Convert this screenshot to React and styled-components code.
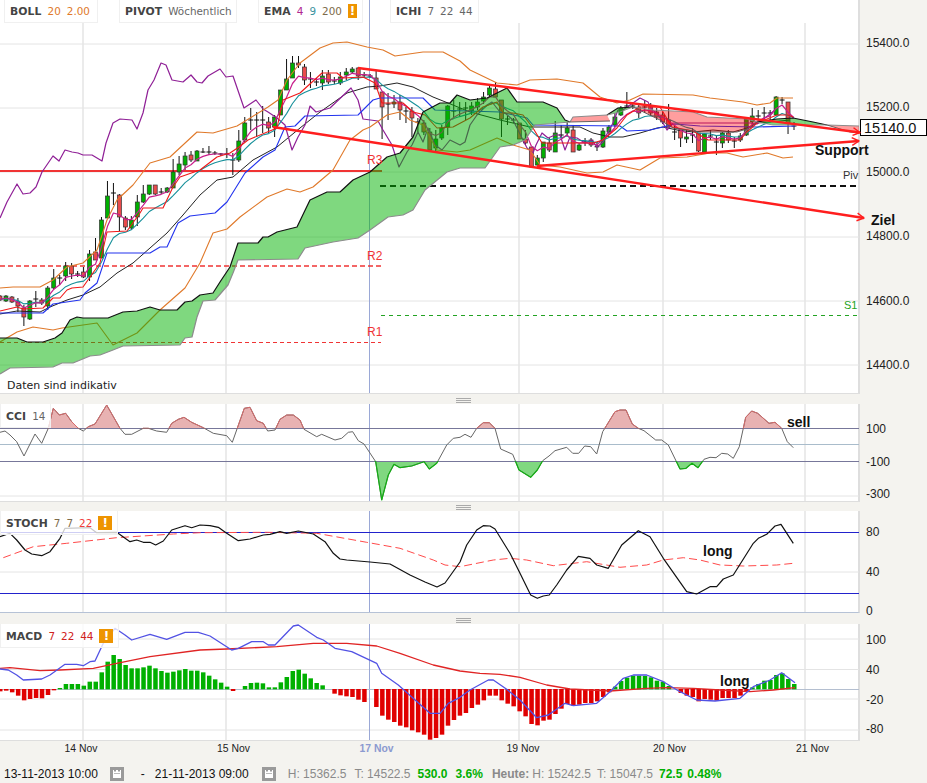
import React from 'react';
import styled, { createGlobalStyle } from 'styled-components';

const GlobalStyle = createGlobalStyle`
    html, body {
        margin: 0;
        padding: 0;
        background: #f4f3ef;
    }
`

const colors = {
    grid: '#e4e4e4',
    marker: '#9aa8d6',
    panel: '#f4f3ef',
    border: '#dedede',
    trend: '#ff1e1e',
    pivot: '#f03434',
    green: '#00b000',
    candleRed: '#e94b4b',
    orange: '#e0792a',
    text: '#222',
    muted: '#8a8a8a'
}

// traced from the 3x crops: offset + point / 3
const trace = (ox, oy, line) => line.trim().split(/\s+/).map(p => {
    const [x, y] = p.split(',').map(Number)
    return `${(ox + x / 3).toFixed(1)},${(oy + y / 3).toFixed(1)}`
}).join(' ')

const reversed = line => line.trim().split(/\s+/).reverse().join(' ')
const STEP = 5.97

// hi, lo, top, bottom, kind (g up, r down, d doji with top only)
const candles = [
    [295,301,296,300,'r'],[295,302,296,301,'g'],[296,303,297,302,'r'],[298,312,302,306,'r'],[305,326,308,317,'r'],
    [300,320,301,319,'g'],[291,307,299,299,'d'],[298,305,300,303,'r'],[286,310,288,306,'g'],[269,290,278,288,'g'],
    [275,285,278,278,'d'],[262,281,266,276,'g'],[263,279,266,274,'r'],[271,277,274,274,'d'],[267,278,272,277,'r'],
    [250,281,254,277,'g'],[238,260,252,260,'r'],[217,258,220,258,'g'],[181,218,196,218,'g'],[183,205,193,193,'d'],
    [194,231,195,217,'r'],[216,230,218,227,'r'],[216,230,220,228,'g'],[195,226,202,217,'g'],[185,203,194,202,'g'],
    [185,195,185,194,'g'],[185,195,185,194,'r'],[188,194,192,192,'d'],[187,193,188,192,'g'],[159,188,172,188,'g'],
    [156,175,164,172,'g'],[152,170,156,165,'g'],[151,162,155,160,'r'],[150,161,151,161,'g'],[148,153,152,152,'d'],
    [146,155,152,152,'d'],[151,155,153,153,'d'],[153,156,154,154,'d'],[148,158,154,154,'d'],[153,175,160,160,'d'],
    [130,162,141,160,'g'],[117,142,123,140,'g'],[108,130,120,120,'d'],[112,137,120,120,'d'],[106,133,120,120,'d'],
    [117,133,122,128,'r'],[115,137,117,127,'g'],[90,115,90,115,'g'],[59,90,79,90,'g'],[56,78,63,78,'g'],
    [56,68,63,65,'r'],[64,85,67,80,'r'],[72,88,79,79,'d'],[78,86,82,82,'d'],[70,90,76,83,'g'],
    [70,84,74,82,'r'],[77,84,81,81,'d'],[72,85,77,83,'g'],[68,80,72,75,'g'],[67,74,69,72,'g'],
    [67,80,68,76,'r'],[72,78,75,75,'d'],[74,78,76,76,'d'],[71,89,78,89,'r'],[92,139,92,107,'r'],
    [93,120,104,104,'d'],[95,108,102,104,'g'],[95,120,102,110,'r'],[107,123,111,111,'d'],[107,137,111,118,'r'],
    [118,132,122,122,'d'],[120,135,123,132,'r'],[128,150,132,150,'r'],[130,152,139,148,'g'],[125,140,128,138,'g'],
    [105,135,106,127,'g'],[100,118,111,111,'d'],[102,117,109,109,'d'],[102,120,108,108,'d'],[102,115,106,111,'g'],
    [98,110,102,107,'g'],[92,104,97,101,'g'],[86,96,88,95,'g'],[82,97,89,97,'r'],[100,137,100,119,'r'],
    [116,125,119,119,'d'],[118,123,120,120,'d'],[123,139,123,139,'r'],[130,145,139,143,'r'],[147,167,147,167,'r'],
    [155,167,158,165,'g'],[142,162,142,158,'g'],[138,152,143,150,'r'],[121,152,133,152,'g'],[125,138,135,135,'d'],
    [122,135,128,133,'g'],[125,152,130,152,'r'],[143,151,145,150,'g'],[138,146,142,142,'d'],[138,147,140,145,'r'],
    [142,151,146,147,'r'],[128,148,131,147,'g'],[125,135,127,132,'g'],[113,127,117,125,'g'],[106,116,108,115,'g'],
    [92,107,106,106,'d'],[102,109,106,106,'d'],[103,118,107,113,'r'],[100,113,107,107,'d'],[103,116,106,113,'r'],
    [108,120,112,117,'r'],[112,124,115,122,'r'],[104,127,120,127,'r'],[125,140,132,132,'d'],[130,147,130,138,'r'],
    [130,143,137,139,'g'],[128,143,135,135,'d'],[133,152,133,151,'r'],[134,152,134,152,'g'],[130,140,136,136,'d'],
    [135,155,142,142,'d'],[132,148,133,143,'g'],[130,143,133,140,'r'],[137,148,141,141,'d'],[133,142,136,140,'g'],
    [118,136,119,135,'g'],[108,127,116,122,'g'],[110,122,116,116,'d'],[107,119,113,113,'d'],[110,121,113,113,'d'],
    [96,115,97,115,'g'],[97,104,100,100,'d'],[102,134,102,123,'r'],[122,130,126,126,'d']
]

const ema = k => {
    let value = 299
    return candles.map((c, i) => {
        const close = c[4] === 'g' ? c[2] : c[3]
        value = value + (close - value) * k
        return `${(i * STEP).toFixed(1)},${value.toFixed(1)}`
    }).join(' ')
}

const lines = {
    lagging: `0,218 7,202 17,184 23,194 30,193 36,187 42,172 53,156 59,161 65,150 72,152 78,153 83,155 92,155 102,161 106,143 113,123 120,119 132,120 137,129 143,113 148,90 154,80 161,63 166,65 172,80 183,82 191,75 197,82 202,83 208,76 220,69 226,77 233,76 244,108 256,100 263,109 268,112 277,118 285,125 292,150 298,137 305,125 310,106 316,112 330,108 351,88 358,100 363,119 378,121 383,130 392,145 399,167 407,152 412,145 418,132 423,142 428,128 435,145 442,150 450,140 460,145 465,142 470,125 477,115 487,105 492,102 500,112 505,113 513,120 518,130 523,140 527,148 533,153 536,145 542,133 548,138 555,135 560,135 565,150 570,137 577,138 585,143 592,140 597,147 603,142 608,132 613,123 618,110 623,110 633,103 640,98 648,102 652,110 657,113 663,123 667,130 673,123 750,123 757,124 765,118 775,110`,
    slow: `0,314 17,311 40,312 50,307 67,300 83,295 100,287 117,273 133,263 150,248 167,233 183,215 200,195 217,180 233,177 253,160 277,147 300,128 320,112 347,93 367,87 380,86 397,83 413,87 433,97 448,103 470,112 500,120 530,127 550,127 580,127 593,133 610,137 623,137 640,133 657,128 663,127 677,130 693,132 713,130 733,132 747,128 757,123 770,122 790,120`,
    base: `0,313 43,313 53,304 80,300 85,293 97,283 107,253 150,253 160,247 167,247 178,223 190,216 215,213 227,202 245,173 263,157 275,150 285,127 295,126 305,116 358,115 373,100 380,98 423,98 435,110 500,112 527,118 533,125 620,126 627,131 650,130 663,127 675,124 700,126 757,127 795,126`,
    conversion: `0,311 17,307 23,309 43,308 53,298 60,298 67,290 72,288 83,287 100,263 107,232 127,231 140,213 143,208 163,208 173,187 180,177 200,170 217,157 230,153 239,147 248,140 277,128 283,100 300,93 322,73 337,73 343,78 363,77 375,83 382,103 403,103 413,112 425,115 437,128 453,127 470,118 483,107 497,102 503,113 513,113 523,115 533,128 542,143 593,143 603,140 617,128 627,115 640,107 660,107 672,127 693,131 708,140 740,140 747,132 757,123 777,115 788,115 793,117`,
    upper: `0,288 13,287 40,287 53,280 67,267 83,263 97,250 107,220 117,200 133,185 150,163 170,157 197,132 213,133 237,126 268,107 278,100 287,80 300,63 320,48 333,43 347,42 367,47 383,50 395,56 423,52 443,52 460,61 470,70 497,83 517,85 530,80 557,79 583,83 600,97 617,103 630,100 643,94 693,95 710,98 743,102 757,105 770,103 777,98 793,98`,
    lower: `0,342 17,332 33,327 53,330 62,328 97,323 113,345 137,333 160,310 185,288 200,263 213,233 227,229 240,217 267,197 287,189 300,192 313,187 333,170 350,140 363,130 370,127 387,115 400,112 410,120 423,125 437,150 457,152 470,150 497,138 513,145 530,150 540,165 560,167 587,173 603,172 617,165 640,170 660,158 687,157 710,153 727,153 743,157 767,153 783,158 793,157`
}

const cloud = {
    greenTop: `0,338 17,338 27,342 43,342 55,338 62,333 70,320 77,317 83,318 108,318 123,312 137,311 150,307 160,310 177,310 185,302 192,301 200,295 213,293 220,282 230,267 238,243 258,243 263,237 268,237 277,232 297,227 310,200 327,192 340,192 353,180 370,172 387,157 400,153 413,137 423,112 440,103 450,103 457,95 470,100 487,98 507,88 517,102 543,102 557,108 565,120 570,122`,
    greenBottom: `0,374 10,368 53,367 62,363 73,363 90,356 100,355 113,350 123,346 180,345 185,338 192,337 197,317 203,301 215,300 228,285 233,273 238,260 298,259 305,248 333,242 358,238 370,230 388,217 403,215 413,210 425,190 447,172 460,168 485,168 500,147 513,145 525,140 535,125 570,122`,
    bands: [
        { top: '570,122 573,117 607,115', bottom: '570,122 610,121', fill: 'pink' },
        { top: '607,115 618,108 633,107', bottom: '607,115 620,112 633,107', fill: 'green' },
        { top: '633,107 653,110 693,112 707,117 747,119 757,122', bottom: '633,107 660,120 673,128 700,132 737,132 750,128 757,122', fill: 'pink' },
        { top: '757,122 777,119 793,118 813,122 827,125', bottom: '757,122 773,125 827,125', fill: 'green' },
        { top: '827,125 859,126', bottom: '827,125 837,128 850,132 859,133', fill: 'pink' }
    ]
}

const cci = `${trace(0, 380, `0,157 15,153 30,165 50,185 72,228 105,162 125,190 145,145 160,85 178,105 197,100 215,125 235,145 250,153 265,140 285,132 320,75 360,145 375,163 395,163 430,145 445,145 470,153 500,157 515,130 535,118 552,112 575,127 610,143 640,160 680,167 697,187 733,85 750,82 770,122 790,130 803,153 825,150 840,118 860,105 880,105 900,120 912,148 950,170 965,163 1005,180 1025,175 1045,157 1058,155 1075,182 1092,192 1127,245 1145,360 1165,285 1182,253 1200,263 1235,258 1272,245 1288,267 1310,250 1340,195 1360,175`)} ${trace(460, 395, `0,127 15,118 33,127 50,100 70,83 88,83 105,100 122,162 158,178 177,225 212,247 232,225 248,197 267,183 285,167 320,157 338,175 356,175 374,153 392,155 410,177 428,110 465,50 480,45 498,45 517,87 535,100 552,107 587,135 605,135 625,150 660,222 678,220 696,205 714,218 732,193 750,187 768,188 785,175 803,177 820,190 838,155 857,67 875,48 893,55 927,85 945,82 965,100 982,140 1000,158`)}`

const stochFast = `${trace(0, 380, `0,470 30,460 50,480 75,510 95,522 125,527 150,515 180,475 195,445 270,443 290,458 350,457 390,485 410,480 430,487 450,487 467,495 490,483 515,450 555,437 575,443 600,435 630,437 655,442 680,460 715,482 750,477 790,465 810,463 840,455 860,460 895,453 940,462 975,485 1000,520 1020,537 1040,540`)} 370,562 390,564 410,575 425,582 437,587 445,583 460,562 ${trace(460, 395, `20,450 50,405 70,392 90,393 105,402 150,475 180,535 212,600 232,610 250,603 268,600 290,570 320,525 355,484 390,490 410,510 445,520 485,450 535,407 570,425 610,490 680,590 710,597 750,575 770,575 790,552 820,540 880,445 895,430 920,418 945,393 963,388 1000,445`)}`

const stochSlow = `${trace(0, 380, `10,533 100,500 200,490 350,473 520,462 600,458 800,457 950,460 1100,487 1200,505 1300,540`)} 445,565 ${trace(460, 395, `0,515 100,495 150,490 200,495 280,512 380,500 480,517 560,510 610,495 670,488 720,495 780,510 850,513 950,510 1000,505`)}`

const macdFast = `${trace(0, 610, `0,177 25,180 50,195 70,210 125,207 150,195 195,163 230,163 250,167 270,155 285,153 310,100 345,55 375,75 395,90 450,73 500,88 555,67 595,67 630,78 695,120 715,115 755,95 790,95 805,105 825,105 880,48 895,45 950,82 970,90 1005,115 1055,125 1130,160 1145,190 1195,225 1290,310 1320,310 1345,280 1380,262`)} ${trace(460, 610, `30,240 85,210 100,210 140,238 180,270 230,323 265,315 315,280 340,287 410,280 450,245 490,205 520,195 560,195 610,215 660,245 710,270 765,273 840,265 880,230 930,210 965,188 1005,218`)}`

const macdSlow = `${trace(0, 610, `0,175 30,173 120,182 180,180 280,175 350,160 450,140 600,120 680,117 830,110 940,100 1040,100 1130,108 1200,130 1300,165 1380,183`)} ${trace(460, 610, `60,190 120,193 180,202 260,225 330,237 450,243 560,235 620,233 700,235 780,240 870,245 940,240 1005,233`)}`

// ends of the histogram bars in 3x crop pixels, zero line at 238
const macdBars = [245,243,248,258,272,268,265,266,256,242,234,222,222,222,227,215,215,187,155,135,147,165,175,175,172,167,175,183,188,185,181,177,182,182,187,197,208,218,230,244,238,228,219,218,220,232,232,217,201,183,179,191,205,219,226,238,252,257,260,262,270,277,238,292,318,330,337,348,353,362,368,375,390,385,375,348,331,318,310,295,285,272,258,258,272,282,290,305,320,343,347,333,330,313,297,283,288,285,280,280,275,262,248,230,213,203,197,197,198,202,212,215,228,238,250,258,262,275,268,270,273,265,265,265,258,245,232,222,212,210,195,190,207,222]

const verticals = [83, 226, 519, 663, 805]

const Page = styled.div`
    width: 927px;
    height: 783px;
    overflow: hidden;
    background: ${colors.panel};
    display: flex;
    flex-direction: column;
    font-family: "Liberation Sans", Arial, sans-serif;
`

const Panel = styled.div`
    display: flex;
    height: ${({ $h }) => $h}px;
    flex: none;
`

const Plot = styled.div`
    position: relative;
    z-index: 2;
    width: 860px;
    height: 100%;
    box-sizing: border-box;
    background: #fff;
    border-right: 2px solid ${colors.border};
    border-bottom: 1px solid ${({ $edge }) => $edge || colors.border};
    flex: none;
`

const Chart = styled.svg`
    display: block;
    overflow: visible;
`

const Axis = styled.div`
    position: relative;
    flex: 1;
    display: grid;
    grid-auto-rows: ${({ $step }) => $step}px;
    align-content: start;
    padding: ${({ $top }) => $top}px 0 0 6px;
    font-size: 12px;
    color: ${colors.text};
`

const AxisValue = styled.div`
    line-height: 14px;
`

const PriceTag = styled.div`
    position: absolute;
    left: 0;
    top: 119px;
    width: 67px;
    height: 17px;
    box-sizing: border-box;
    border: 1px solid #000;
    background: #fff;
    font-size: 14.5px;
    line-height: 16px;
    padding-left: 3px;
    color: #111;
`

const Separator = styled.div`
    height: ${({ $h }) => $h}px;
    flex: none;
    display: flex;
    justify-content: center;
    align-items: flex-end;
    box-sizing: border-box;
    padding-bottom: 1px;
`

const Handle = styled.div`
    width: 15px;
    height: 5px;
    border-top: 1px solid #aaa;
    border-bottom: 1px solid #aaa;
    background: linear-gradient(#aaa, #aaa) center / 100% 1px no-repeat;
    box-sizing: border-box;
`

const LegendBar = styled.div`
    position: absolute;
    left: 4px;
    top: 0;
    display: flex;
    gap: 21px;
`

const Legend = styled.div`
    display: flex;
    align-items: center;
    gap: 6px;
    width: ${({ $w }) => ($w ? `${$w}px` : 'auto')};
    margin-left: ${({ $ml }) => $ml || 0}px;
    height: 23px;
    padding: 0 5px;
    box-sizing: border-box;
    background: rgba(255, 255, 255, 0.78);
    border: 1px solid #f0f0f0;
    border-top: none;
    font-family: "DejaVu Sans", Verdana, sans-serif;
    font-size: 10.4px;
    color: #555;
    white-space: nowrap;
`

const Overlay = styled(Legend)`
    position: absolute;
    left: 0;
    top: 0;
    height: 24px;
    padding-top: 1px;
`

const LegendName = styled.span`
    font-weight: bold;
    color: #444;
    font-size: 10.8px;
    letter-spacing: 0.1px;
`

const LegendValue = styled.span`
    color: ${({ $color }) => $color || '#666'};
`

const Warn = styled.span`
    display: inline-flex;
    align-items: center;
    justify-content: center;
    width: 14px;
    height: 14px;
    background: #ee9400;
    color: #fff;
    font-family: "DejaVu Sans", sans-serif;
    font-size: 12px;
    font-weight: bold;
`

const Ticks = styled.div`
    display: flex;
    height: 23px;
    flex: none;
    padding-top: 1px;
    box-sizing: border-box;
    font-size: 10.4px;
    line-height: 14px;
`

const Tick = styled.div`
    width: ${({ $w }) => $w}px;
    flex: none;
    text-align: center;
    color: ${({ $color }) => $color || colors.text};
    font-weight: ${({ $color }) => ($color ? 'bold' : 'normal')};
`

const Footer = styled.div`
    display: flex;
    align-items: center;
    height: 19px;
    flex: none;
    padding-left: 4px;
    font-size: 12px;
    white-space: nowrap;
    color: ${colors.muted};
`

const DateText = styled.span`
    color: #111;
    margin-left: ${({ $ml }) => $ml || 0}px;
`

const Stat = styled.span`
    margin-left: ${({ $ml }) => $ml}px;
    font-weight: ${({ $bold }) => ($bold ? 'bold' : 'normal')};
    color: ${({ $color }) => $color || colors.muted};
`

const Calendar = styled.svg`
    margin-left: ${({ $ml }) => $ml}px;
    flex: none;
`

const ChartLabel = styled.text`
    font-family: ${({ $font }) => $font || '"Liberation Sans", Arial, sans-serif'};
    font-size: ${({ $size }) => $size || 12}px;
    font-weight: ${({ $bold }) => ($bold ? 'bold' : 'normal')};
    fill: ${({ $color }) => $color || '#111'};
`

const Trace = styled.polyline`
    fill: none;
    stroke: ${({ $color }) => $color};
    stroke-width: ${({ $w }) => $w || 1}px;
    stroke-linejoin: round;
    stroke-dasharray: ${({ $dash }) => $dash || 'none'};
`

const Rule = styled.line`
    stroke: ${({ $color }) => $color || colors.grid};
    stroke-width: ${({ $w }) => $w || 1}px;
    stroke-dasharray: ${({ $dash }) => $dash || 'none'};
`

const GridRules = ({ y1, y2, rows = [] }) => (
    <>
        {rows.map(y => <Rule key={y} x1="0" x2="859" y1={y} y2={y} />)}
        {verticals.map(x => <Rule key={x} x1={x} x2={x} y1={y1} y2={y2} $w="1.5" />)}
        <Rule x1="369.5" x2="369.5" y1={y1} y2={y2} $color={colors.marker} />
    </>
)

const Candles = () => candles.map((c, i) => {
    const [hi, lo, top, bottom, kind] = c
    const x = i * STEP
    return (
        <g key={i}>
            <Rule x1={x} x2={x} y1={hi} y2={lo} $color="#111" />
            {kind === 'd'
                ? <Rule x1={x - 2.5} x2={x + 2.5} y1={top} y2={top} $color="#111" />
                : <rect
                    x={x - 2}
                    y={top}
                    width="4"
                    height={bottom - top}
                    fill={kind === 'g' ? colors.green : colors.candleRed}
                    stroke="#333"
                    strokeWidth="0.7"
                />}
        </g>
    )
})

const Arrow = ({ x1, y1, x2, y2 }) => {
    const a = Math.atan2(y2 - y1, x2 - x1)
    const head = d => `${x2 - 8 * Math.cos(a + d)},${y2 - 8 * Math.sin(a + d)}`
    return (
        <>
            <Rule x1={x1} y1={y1} x2={x2} y2={y2} $color={colors.trend} $w="2.4" />
            <Trace points={`${head(0.5)} ${x2},${y2} ${head(-0.5)}`} $color={colors.trend} $w="1.4" />
        </>
    )
}

const MainChart = () => (
    <Chart width="858" height="393" viewBox="0 0 858 393">
        <GridRules y1="23" y2="393" rows={[44, 108, 172, 237, 301, 365]} />
        <Rule x1="369.5" x2="369.5" y1="0" y2="23" $color={colors.marker} />

        <Rule x1="0" x2="382" y1="171" y2="171" $color={colors.pivot} $w="2.2" />
        <Rule x1="0" x2="381" y1="266" y2="266" $color={colors.pivot} $w="1.6" $dash="5 3" />
        <Rule x1="0" x2="381" y1="342.5" y2="342.5" $color={colors.pivot} $dash="4 3" />
        <Rule x1="380" x2="859" y1="186" y2="186" $color="#111" $w="2" $dash="6 4" />
        <Rule x1="381" x2="859" y1="315.5" y2="315.5" $color="#23a323" $dash="4 4" />

        <Candles />
        <Trace points={lines.slow} $color="#222" />
        <Trace points={lines.lagging} $color="#8f1f96" $w="1.2" />
        <Trace points={lines.upper} $color={colors.orange} $w="1.1" />
        <Trace points={lines.lower} $color={colors.orange} $w="1.1" />
        <Trace points={lines.base} $color="#2233ee" $w="1.1" />
        <Trace points={ema(0.2)} $color="#17909a" $w="1.1" />
        <Trace points={ema(0.4)} $color="#c81e8c" $w="1.2" />
        <Trace points={lines.conversion} $color="#f01818" $w="1.1" />

        <polygon points={`${cloud.greenTop} ${reversed(cloud.greenBottom)}`} fill="rgba(0, 178, 0, 0.5)" />
        <Trace points={cloud.greenTop} $color="#111" $w="1.2" />
        <Trace points={cloud.greenBottom} $color="#8c8c8c" $w="1.2" />
        {cloud.bands.map(band => (
            <g key={band.top}>
                <polygon
                    points={`${band.top} ${reversed(band.bottom)}`}
                    fill={band.fill === 'pink' ? 'rgba(255, 0, 0, 0.38)' : 'rgba(0, 178, 0, 0.5)'}
                />
                <Trace points={band.top} $color={band.fill === 'pink' ? '#8c8c8c' : '#111'} $w="1.1" />
                <Trace points={band.bottom} $color={band.fill === 'pink' ? '#555' : '#8c8c8c'} $w="0.9" />
            </g>
        ))}

        <ChartLabel x="367" y="164" $color={colors.pivot}>R3</ChartLabel>
        <ChartLabel x="367" y="260" $color={colors.pivot}>R2</ChartLabel>
        <ChartLabel x="367" y="336" $color={colors.pivot}>R1</ChartLabel>
        <ChartLabel x="843" y="179" $size="11" $color="#333">Piv</ChartLabel>
        <ChartLabel x="844" y="309" $size="11" $color="#23a323">S1</ChartLabel>
        <ChartLabel x="7" y="389" $size="11" $color="#222" $font='"DejaVu Sans", sans-serif'>Daten sind indikativ</ChartLabel>

        <Arrow x1="358" y1="68" x2="860" y2="132.5" />
        <Arrow x1="273" y1="127" x2="864" y2="218" />
        <Arrow x1="537" y1="166" x2="859" y2="141" />

        <ChartLabel x="815" y="155" $size="14" $bold>Support</ChartLabel>
        <ChartLabel x="871" y="225" $size="14" $bold>Ziel</ChartLabel>
    </Chart>
)

const CciChart = () => (
    <Chart width="858" height="97" viewBox="0 404 858 97">
        <defs>
            <clipPath id="cci-top"><rect x="0" y="404" width="859" height="24.5" /></clipPath>
            <clipPath id="cci-bottom"><rect x="0" y="461" width="859" height="41" /></clipPath>
        </defs>
        <GridRules y1="404" y2="501" rows={[496]} />
        <Rule x1="0" x2="859" y1="444.5" y2="444.5" $color="#a9bccb" />
        <polygon points={`0,428.5 ${cci} 794,428.5`} fill="#e8b2b2" clipPath="url(#cci-top)" />
        <polygon points={`0,461 ${cci} 794,461`} fill="#80d880" clipPath="url(#cci-bottom)" />
        <Rule x1="0" x2="859" y1="428.5" y2="428.5" $color="#77779a" />
        <Rule x1="0" x2="859" y1="461.5" y2="461.5" $color="#77779a" />
        <Trace points={cci} $color="#666" />
        <Trace points={cci} $color="#d86a6a" clipPath="url(#cci-top)" />
        <Trace points={cci} $color="#12b012" $w="1.2" clipPath="url(#cci-bottom)" />
        <ChartLabel x="787" y="427" $size="14" $bold>sell</ChartLabel>
    </Chart>
)

const StochChart = () => (
    <Chart width="858" height="101" viewBox="0 511 858 101">
        <GridRules y1="511" y2="612" rows={[572]} />
        <Rule x1="0" x2="859" y1="532.5" y2="532.5" $color="#2222cc" />
        <Rule x1="0" x2="859" y1="593.5" y2="593.5" $color="#2222cc" />
        <Trace points={stochSlow} $color="#ff4a4a" $dash="8 4" />
        <Trace points={stochFast} $color="#111" $w="1.2" />
        <ChartLabel x="703" y="556" $size="14" $bold>long</ChartLabel>
    </Chart>
)

const MacdChart = () => (
    <Chart width="858" height="116" viewBox="0 624 858 116">
        <GridRules y1="624" y2="740" rows={[639, 669.5, 699, 730]} />
        <Rule x1="0" x2="859" y1="689.5" y2="689.5" $color="#b4bfd0" />
        {macdBars.map((end, i) => (
            <rect
                key={i}
                x={i * STEP - 2}
                y={end < 238 ? 610 + end / 3 : 689}
                width="4.5"
                height={Math.abs(end - 238) / 3}
                fill={end < 238 ? colors.green : '#e00000'}
            />
        ))}
        <Trace points={macdSlow} $color="#e02424" $w="1.3" />
        <Trace points={macdFast} $color="#5252e4" $w="1.3" />
        <ChartLabel x="720" y="686" $size="14" $bold>long</ChartLabel>
    </Chart>
)

const CalendarIcon = ({ ml }) => (
    <Calendar $ml={ml} width="14" height="14" viewBox="0 0 14 14">
        <rect width="14" height="14" fill="#9a9a9a" />
        <rect x="3" y="3" width="8" height="8" fill="#fff" />
        <rect x="4" y="1.5" width="2" height="3" fill="#9a9a9a" />
        <rect x="8" y="1.5" width="2" height="3" fill="#9a9a9a" />
        <rect x="4" y="6" width="6" height="1" fill="#bbb" />
    </Calendar>
)

const App = () => (
    <Page>
        <GlobalStyle />
        <Panel $h={394}>
            <Plot>
                <MainChart />
                <LegendBar>
                    <Legend $w={94}>
                        <LegendName>BOLL</LegendName>
                        <LegendValue $color={colors.orange}>20</LegendValue>
                        <LegendValue $color={colors.orange}>2.00</LegendValue>
                    </Legend>
                    <Legend $w={118}>
                        <LegendName>PIVOT</LegendName>
                        <LegendValue>Wöchentlich</LegendValue>
                    </Legend>
                    <Legend $w={105}>
                        <LegendName>EMA</LegendName>
                        <LegendValue $color="#b0278f">4</LegendValue>
                        <LegendValue $color="#3a93a0">9</LegendValue>
                        <LegendValue $color="#7d6b4a">200</LegendValue>
                        <Warn>!</Warn>
                    </Legend>
                    <Legend $ml={6}>
                        <LegendName>ICHI</LegendName>
                        <LegendValue>7</LegendValue>
                        <LegendValue>22</LegendValue>
                        <LegendValue>44</LegendValue>
                    </Legend>
                </LegendBar>
            </Plot>
            <Axis $step={64.4} $top={36}>
                <AxisValue>15400.0</AxisValue>
                <AxisValue>15200.0</AxisValue>
                <AxisValue>15000.0</AxisValue>
                <AxisValue>14800.0</AxisValue>
                <AxisValue>14600.0</AxisValue>
                <AxisValue>14400.0</AxisValue>
                <PriceTag>15140.0</PriceTag>
            </Axis>
        </Panel>
        <Separator $h={10}><Handle /></Separator>
        <Panel $h={98}>
            <Plot>
                <CciChart />
                <Overlay>
                    <LegendName>CCI</LegendName>
                    <LegendValue>14</LegendValue>
                </Overlay>
            </Plot>
            <Axis $step={32.5} $top={18}>
                <AxisValue>100</AxisValue>
                <AxisValue>-100</AxisValue>
                <AxisValue>-300</AxisValue>
            </Axis>
        </Panel>
        <Separator $h={9}><Handle /></Separator>
        <Panel $h={102}>
            <Plot $edge="#b6c2d6">
                <StochChart />
                <Overlay>
                    <LegendName>STOCH</LegendName>
                    <LegendValue $color="#7d6b4a">7</LegendValue>
                    <LegendValue $color="#7d6b4a">7</LegendValue>
                    <LegendValue $color="#f03a3a">22</LegendValue>
                    <Warn>!</Warn>
                </Overlay>
            </Plot>
            <Axis $step={39.5} $top={14}>
                <AxisValue>80</AxisValue>
                <AxisValue>40</AxisValue>
                <AxisValue>0</AxisValue>
            </Axis>
        </Panel>
        <Separator $h={11}><Handle /></Separator>
        <Panel $h={117}>
            <Plot>
                <MacdChart />
                <Overlay>
                    <LegendName>MACD</LegendName>
                    <LegendValue $color="#d02020">7</LegendValue>
                    <LegendValue $color="#d02020">22</LegendValue>
                    <LegendValue $color="#d02020">44</LegendValue>
                    <Warn>!</Warn>
                </Overlay>
            </Plot>
            <Axis $step={29.8} $top={9}>
                <AxisValue>100</AxisValue>
                <AxisValue>40</AxisValue>
                <AxisValue>-20</AxisValue>
                <AxisValue>-80</AxisValue>
            </Axis>
        </Panel>
        <Ticks>
            <Tick $w={162}>14 Nov</Tick>
            <Tick $w={143}>15 Nov</Tick>
            <Tick $w={143} $color="#8c9ad0">17 Nov</Tick>
            <Tick $w={150}>19 Nov</Tick>
            <Tick $w={143}>20 Nov</Tick>
            <Tick $w={143}>21 Nov</Tick>
        </Ticks>
        <Footer>
            <DateText>13-11-2013 10:00</DateText>
            <CalendarIcon ml={12} />
            <DateText $ml={17}>-</DateText>
            <DateText $ml={10}>21-11-2013 09:00</DateText>
            <CalendarIcon ml={13} />
            <Stat $ml={12}>H: 15362.5</Stat>
            <Stat $ml={8}>T: 14522.5</Stat>
            <Stat $ml={7} $bold $color={colors.green}>530.0</Stat>
            <Stat $ml={8} $bold $color={colors.green}>3.6%</Stat>
            <Stat $ml={9} $bold>Heute:</Stat>
            <Stat $ml={3}>H: 15242.5</Stat>
            <Stat $ml={6}>T: 15047.5</Stat>
            <Stat $ml={6} $bold $color={colors.green}>72.5</Stat>
            <Stat $ml={5} $bold $color={colors.green}>0.48%</Stat>
        </Footer>
    </Page>
)

export default App
